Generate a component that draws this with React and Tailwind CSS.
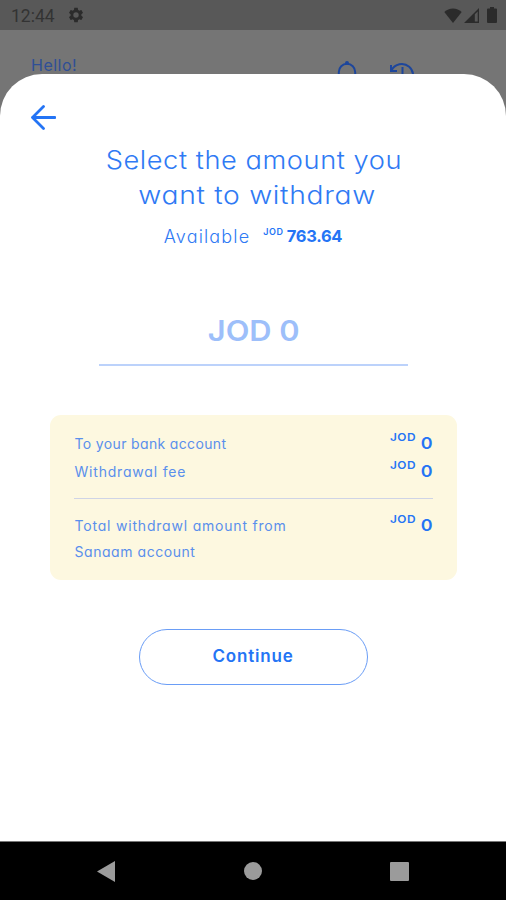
import clsx from "clsx";

const StatusBar = () => (
  <div className="flex h-[30px] items-center bg-[#585858] pl-[11px] pr-[9px] text-[#2b2b2b]">
    <span className="pt-[2px] font-['Roboto'] text-[17.5px] leading-[30px] text-[#333]">12:44</span>
    <svg className="ml-[12px] size-[18px]" viewBox="0 0 24 24" fill="currentColor">
      <path d="M19.14 12.94c.04-.3.06-.61.06-.94 0-.32-.02-.64-.07-.94l2.03-1.58c.18-.14.23-.41.12-.61l-1.92-3.32c-.12-.22-.37-.29-.59-.22l-2.39.96c-.5-.38-1.03-.7-1.62-.94l-.36-2.54c-.04-.24-.24-.41-.48-.41h-3.84c-.24 0-.43.17-.47.41l-.36 2.54c-.59.24-1.13.57-1.62.94l-2.39-.96c-.22-.08-.47 0-.59.22L2.74 8.87c-.12.21-.08.47.12.61l2.03 1.58c-.05.3-.09.63-.09.94s.02.64.07.94l-2.03 1.58c-.18.14-.23.41-.12.61l1.92 3.32c.12.22.37.29.59.22l2.39-.96c.5.38 1.03.7 1.62.94l.36 2.54c.05.24.24.41.48.41h3.84c.24 0 .44-.17.47-.41l.36-2.54c.59-.24 1.13-.56 1.62-.94l2.39.96c.22.08.47 0 .59-.22l1.92-3.32c.12-.22.07-.47-.12-.61l-2.01-1.58zM12 15.6A3.6 3.6 0 1 1 12 8.4a3.6 3.6 0 0 1 0 7.2z" />
    </svg>
    <div className="ml-auto flex items-center">
      <svg className="h-[15px] w-[18px]" viewBox="0 0 18 15" fill="currentColor">
        <path d="M9 15 0.3 4Q4 0.4 9 0.4T17.7 4z" />
      </svg>
      <svg className="ml-[2px] h-[15px] w-[15px]" viewBox="0 0 15 15" fill="currentColor">
        <path d="M15 0v15H0zM13.7 3.4 10.8 6.3V13.6h2.9z" fillRule="evenodd" />
      </svg>
      <svg className="ml-[8px] h-[16px] w-[10px]" viewBox="0 0 10 16" fill="currentColor">
        <path d="M3 0h4v1.6h2q1 0 1 1V15q0 1-1 1H1q-1 0-1-1V2.6q0-1 1-1h2z" />
      </svg>
    </div>
  </div>
);

const HomeHeader = () => (
  <div className="flex h-[44px] items-start overflow-hidden pl-[31px] pr-[91px]">
    <span className="mt-[25px] text-[16px] leading-[20px] tracking-[0.5px] text-[#2f4f96]">Hello!</span>
    <svg className="ml-auto mt-[31px] h-[22px] w-[20px] text-[#1d469c]" viewBox="0 0 20 22" fill="none" stroke="currentColor" strokeWidth="2">
      <path d="M1.8 20V11a8.2 8.2 0 0 1 16.4 0v9" />
      <circle cx="10" cy="2" r="1" fill="currentColor" />
    </svg>
    <svg className="ml-[32px] mt-[32px] h-[26px] w-[26px] text-[#1d469c]" viewBox="0 0 26 26" fill="none" stroke="currentColor" strokeWidth="2">
      <path d="M2.5 8.5a11.3 11.3 0 1 1-.6 8" />
      <path d="M2 3v6h6" />
      <path d="M13.5 5v9l5 3" />
    </svg>
  </div>
);

const Amount = ({ value }) => (
  <span className="flex items-start font-semibold">
    <span className="origin-right scale-x-[1.13] text-[10.5px] leading-[12px] tracking-[0.4px]">JOD</span>
    <span className="ml-[6px] origin-right scale-x-[1.12] pt-[2px] text-[16px] leading-[18px]">{value}</span>
  </span>
);

const Row = ({ lines, value, className }) => (
  <div className={clsx("flex justify-between", className)}>
    <span className="-mt-px ml-px flex flex-col text-[14px] leading-[26px] text-[#5a8fec]">
      {lines}
    </span>
    <Amount value={value} />
  </div>
);

const NavBar = () => (
  <div className="flex h-[59px] items-center border-t border-[#777] bg-black px-[97px] text-[#9b9b9b]">
    <svg className="h-[21px] w-[18px]" viewBox="0 0 18 21" fill="currentColor">
      <path d="M18 0v21L0 10.5z" />
    </svg>
    <div className="mx-auto size-[18px] rounded-full bg-[#9b9b9b]" />
    <div className="size-[19px] rounded-[1px] bg-[#9b9b9b]" />
  </div>
);

export default function App() {
  return (
    <div className="flex h-[900px] w-[506px] flex-col overflow-hidden bg-[#757575] font-['Inter',sans-serif] [font-feature-settings:'cv11']">
      <StatusBar />
      <HomeHeader />
      <main className="flex flex-1 flex-col items-center rounded-t-[42px] bg-white text-[#2474f5]">
        <button className="ml-[31px] mt-[31px] self-start">
          <svg className="h-[25px] w-[25px]" viewBox="0 0 25 25" fill="none" stroke="currentColor" strokeWidth="2.8" strokeLinecap="round" strokeLinejoin="round">
            <path d="M12.5 1.5 1.5 12.5l11 11M1.5 12.5H24" />
          </svg>
        </button>

        <h1 className="mt-[13px] flex flex-col items-center text-[25px] font-light leading-[34.5px] text-[#2f7af4]">
          <span className="ml-[2px] scale-x-[1.09] tracking-[0.5px]">Select the amount you</span>
          <span className="ml-[8px] scale-x-[1.13] tracking-[0.6px]">want to withdraw</span>
        </h1>

        <div className="mt-[14px] flex h-[22px]">
          <span className="text-[18px] font-light leading-[22px] tracking-[1.15px] text-[#2f7af4]">Available</span>
          <span className="ml-[13px] text-[9px] font-semibold leading-[11px] tracking-[0.6px]">JOD</span>
          <span className="ml-[3px] text-[16.5px] font-bold leading-[21px] tracking-[-0.3px]">763.64</span>
        </div>

        <div className="mt-[63px] flex h-[55px] w-[309px] justify-center border-b-2 border-[#bcd2fb] pt-[2px] text-[28px] font-semibold leading-[36px] text-[#9dbffa]">
          <span className="ml-px scale-x-[1.1]">JOD 0</span>
        </div>

        <section className="mt-[49px] h-[165px] w-[407px] rounded-[11px] bg-[#fdf8e0] px-[24px] pt-[17px]">
          <Row lines={<span className="tracking-[0.35px]">To your bank account</span>} value="0" className="h-[28px]" />
          <Row lines={<span className="tracking-[0.8px]">Withdrawal fee</span>} value="0" className="h-[28px]" />
          <hr className="mb-[15px] mt-[10px] border-[#cfd4e6]" />
          <Row
            lines={
              <>
                <span className="tracking-[0.8px]">Total withdrawl amount from</span>
                <span className="tracking-[0.55px]">Sanaam account</span>
              </>
            }
            value="0"
          />
        </section>

        <button className="mt-[49px] h-[56px] w-[229px] rounded-full border-[1.5px] border-[#6a9df6] text-[17px] font-semibold tracking-[0.8px]">
          Continue
        </button>
      </main>
      <NavBar />
    </div>
  );
}
